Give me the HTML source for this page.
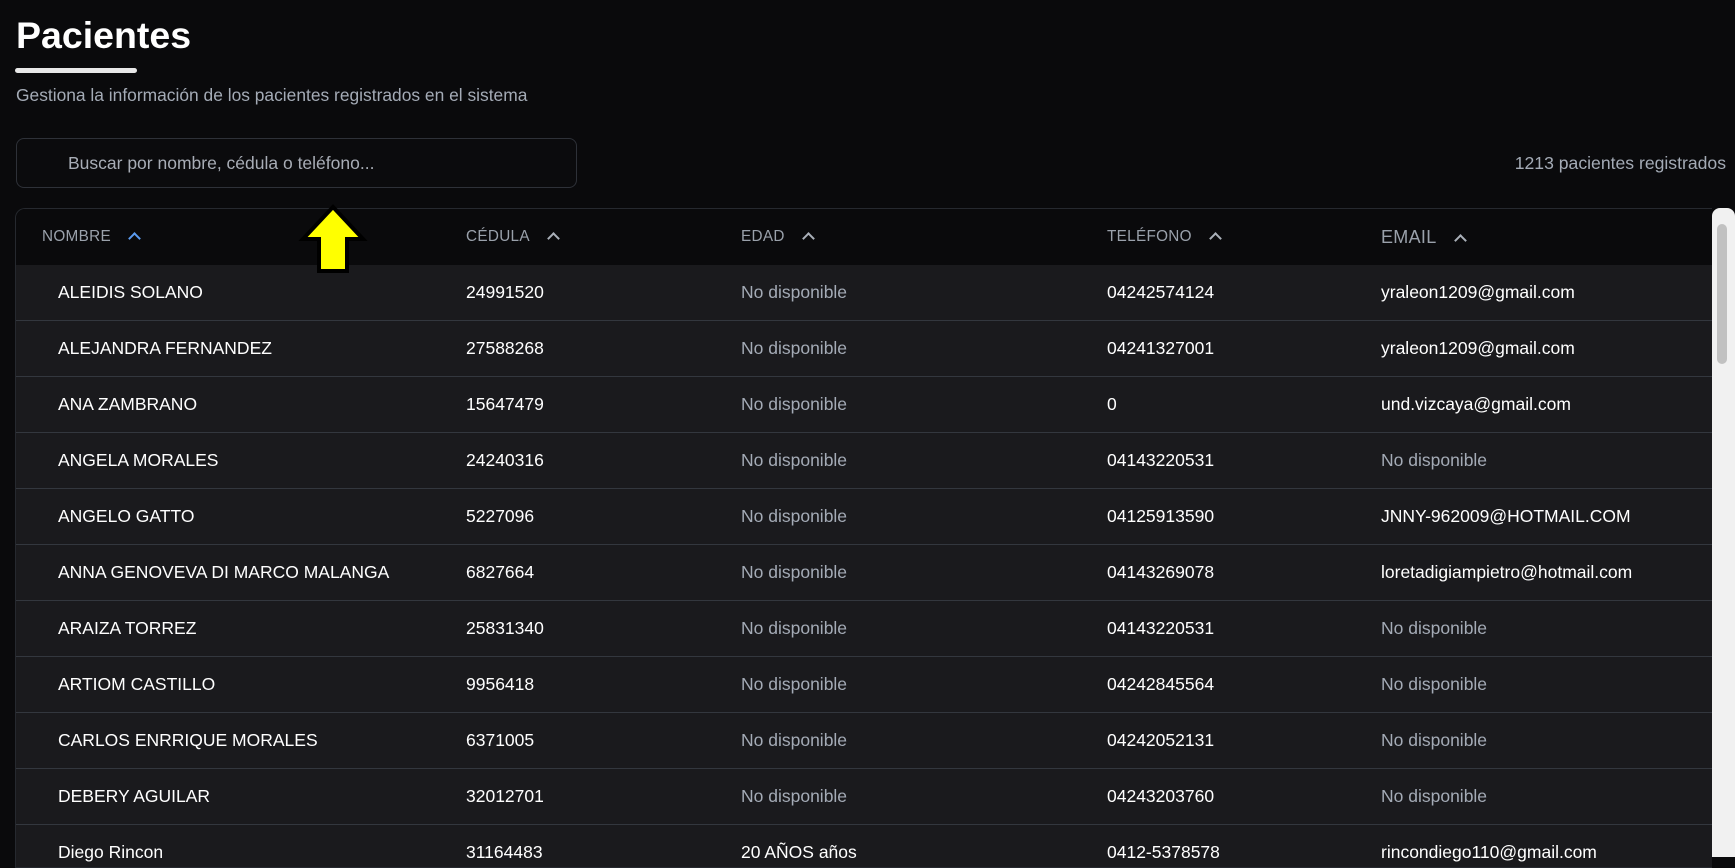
<!DOCTYPE html>
<html><head><meta charset="utf-8"><style>
*{box-sizing:border-box;margin:0;padding:0}
body{width:1735px;height:857px;overflow:hidden;background:#0a0a0c;font-family:"Liberation Sans",Arial,sans-serif;color:#fff;position:relative}
h1{position:absolute;left:16px;top:14px;font-size:37.5px;font-weight:bold;color:#fff}
.bar{position:absolute;left:15px;top:68px;width:122px;height:5px;border-radius:3px;background:#e8e8e8}
.sub{position:absolute;left:16px;top:85px;font-size:17.4px;color:#a4abb6}
.search{position:absolute;left:16px;top:138px;width:561px;height:50px;border:1px solid #2e3138;border-radius:8px;background:#0b0b0d}
.search span{position:absolute;left:51px;top:14px;font-size:17.5px;color:#a8adb6}
.count{position:absolute;right:9px;top:153px;font-size:17.6px;color:#a4abb6}
.table{position:absolute;left:15px;top:208px;width:1697px;height:660px;border:1px solid #26292f;border-radius:10px 0 0 0;overflow:hidden;border-right:none}
.head{height:56px;background:#0a0a0c;position:relative;font-size:15.3px;color:#9aa1ab;letter-spacing:.3px}
.row{height:56px;background:#1a1a1d;border-bottom:1px solid #33373e;position:relative;font-size:17.5px}
.c{position:absolute;top:0;line-height:55px;white-space:nowrap}
.head .c{line-height:56px}
.muted{color:#a4abb6}
.chev{display:inline-block;width:9px;height:9px;border-left:2px solid #aab0b9;border-top:2px solid #aab0b9;transform:rotate(45deg);margin-left:19px;position:relative;top:2px}
.scroll{position:absolute;left:1712px;top:208px;width:23px;height:649px;background:#f1f1f1;border-radius:8px 8px 0 0}
.thumb{position:absolute;left:5px;top:16px;width:10px;height:140px;background:#c1c1c1;border-radius:5px}
</style></head><body>
<h1>Pacientes</h1>
<div class="bar"></div>
<div class="sub">Gestiona la información de los pacientes registrados en el sistema</div>
<div class="search"><span>Buscar por nombre, cédula o teléfono...</span></div>
<div class="count">1213 pacientes registrados</div>
<div class="table">
<div class="head">
<div class="c" style="left:26px">NOMBRE<span class="chev" style="border-color:#5b9bf0"></span></div>
<div class="c" style="left:450px">CÉDULA<span class="chev"></span></div>
<div class="c" style="left:725px">EDAD<span class="chev"></span></div>
<div class="c" style="left:1091px">TELÉFONO<span class="chev"></span></div>
<div class="c" style="left:1365px;font-size:18px">EMAIL<span class="chev"></span></div>
</div>
<div class="row"><div class="c" style="left:42px">ALEIDIS SOLANO</div><div class="c" style="left:450px">24991520</div><div class="c muted" style="left:725px">No disponible</div><div class="c" style="left:1091px">04242574124</div><div class="c" style="left:1365px">yraleon1209@gmail.com</div></div>
<div class="row"><div class="c" style="left:42px">ALEJANDRA FERNANDEZ</div><div class="c" style="left:450px">27588268</div><div class="c muted" style="left:725px">No disponible</div><div class="c" style="left:1091px">04241327001</div><div class="c" style="left:1365px">yraleon1209@gmail.com</div></div>
<div class="row"><div class="c" style="left:42px">ANA ZAMBRANO</div><div class="c" style="left:450px">15647479</div><div class="c muted" style="left:725px">No disponible</div><div class="c" style="left:1091px">0</div><div class="c" style="left:1365px">und.vizcaya@gmail.com</div></div>
<div class="row"><div class="c" style="left:42px">ANGELA MORALES</div><div class="c" style="left:450px">24240316</div><div class="c muted" style="left:725px">No disponible</div><div class="c" style="left:1091px">04143220531</div><div class="c muted" style="left:1365px">No disponible</div></div>
<div class="row"><div class="c" style="left:42px">ANGELO GATTO</div><div class="c" style="left:450px">5227096</div><div class="c muted" style="left:725px">No disponible</div><div class="c" style="left:1091px">04125913590</div><div class="c" style="left:1365px">JNNY-962009@HOTMAIL.COM</div></div>
<div class="row"><div class="c" style="left:42px">ANNA GENOVEVA DI MARCO MALANGA</div><div class="c" style="left:450px">6827664</div><div class="c muted" style="left:725px">No disponible</div><div class="c" style="left:1091px">04143269078</div><div class="c" style="left:1365px">loretadigiampietro@hotmail.com</div></div>
<div class="row"><div class="c" style="left:42px">ARAIZA TORREZ</div><div class="c" style="left:450px">25831340</div><div class="c muted" style="left:725px">No disponible</div><div class="c" style="left:1091px">04143220531</div><div class="c muted" style="left:1365px">No disponible</div></div>
<div class="row"><div class="c" style="left:42px">ARTIOM CASTILLO</div><div class="c" style="left:450px">9956418</div><div class="c muted" style="left:725px">No disponible</div><div class="c" style="left:1091px">04242845564</div><div class="c muted" style="left:1365px">No disponible</div></div>
<div class="row"><div class="c" style="left:42px">CARLOS ENRRIQUE MORALES</div><div class="c" style="left:450px">6371005</div><div class="c muted" style="left:725px">No disponible</div><div class="c" style="left:1091px">04242052131</div><div class="c muted" style="left:1365px">No disponible</div></div>
<div class="row"><div class="c" style="left:42px">DEBERY AGUILAR</div><div class="c" style="left:450px">32012701</div><div class="c muted" style="left:725px">No disponible</div><div class="c" style="left:1091px">04243203760</div><div class="c muted" style="left:1365px">No disponible</div></div>
<div class="row"><div class="c" style="left:42px">Diego Rincon</div><div class="c" style="left:450px">31164483</div><div class="c" style="left:725px">20 AÑOS años</div><div class="c" style="left:1091px">0412-5378578</div><div class="c" style="left:1365px">rincondiego110@gmail.com</div></div>
</div>
<div class="scroll"><div class="thumb"></div></div>
<svg style="position:absolute;left:297px;top:203px" width="72" height="72" viewBox="0 0 72 72">
<polygon points="36,4 66,36 50,36 50,68 22,68 22,36 6,36" fill="#ffff00" stroke="#000" stroke-width="4" stroke-linejoin="miter"/>
</svg>
</body></html>
